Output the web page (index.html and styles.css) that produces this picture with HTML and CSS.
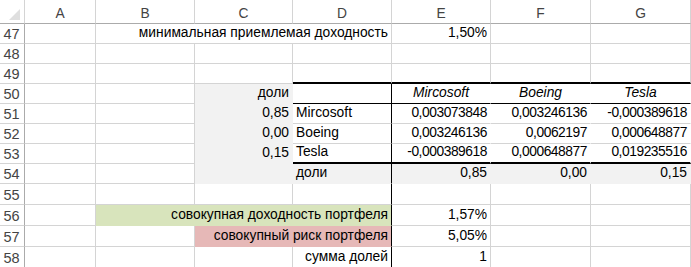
FILE: index.html
```html
<!DOCTYPE html>
<html lang="ru">
<head>
<meta charset="utf-8">
<title>Sheet</title>
<link rel="stylesheet" href="styles.css">
</head>
<body>
<div class="sheet">
  <div class="corner"><svg class="tri" width="12" height="12" viewBox="0 0 12 12"><polygon points="11,0 11,11 0,11" fill="#dfdfdf"/></svg></div>
  <div class="ch">A</div><div class="ch">B</div><div class="ch">C</div><div class="ch">D</div><div class="ch">E</div><div class="ch">F</div><div class="ch">G</div>

  <div class="rh">47</div><div class="c"></div><div class="c r span3">минимальная приемлемая доходность</div><div class="c r">1,50%</div><div class="c"></div><div class="c"></div>

  <div class="rh">48</div><div class="c"></div><div class="c"></div><div class="c"></div><div class="c"></div><div class="c"></div><div class="c"></div><div class="c"></div>

  <div class="rh">49</div><div class="c"></div><div class="c"></div><div class="c"></div><div class="c thickB"></div><div class="c thickB"></div><div class="c thickB"></div><div class="c thickB"></div>

  <div class="rh">50</div><div class="c"></div><div class="c"></div><div class="c r gray">доли</div><div class="c white bR blkB"></div><div class="c ctr it white blkB">Mircosoft</div><div class="c ctr it white blkB">Boeing</div><div class="c ctr it white blkB">Tesla</div>

  <div class="rh">51</div><div class="c"></div><div class="c"></div><div class="c r gray">0,85</div><div class="c white bR">Mircosoft</div><div class="c r num white">0,003073848</div><div class="c r num white">0,003246136</div><div class="c r num white">-0,000389618</div>

  <div class="rh">52</div><div class="c"></div><div class="c"></div><div class="c r gray">0,00</div><div class="c white bR">Boeing</div><div class="c r num white">0,003246136</div><div class="c r num white">0,0062197</div><div class="c r num white">0,000648877</div>

  <div class="rh">53</div><div class="c"></div><div class="c"></div><div class="c r gray">0,15</div><div class="c white bR thickB">Tesla</div><div class="c r num white thickB">-0,000389618</div><div class="c r num white thickB">0,000648877</div><div class="c r num white thickB">0,019235516</div>

  <div class="rh">54</div><div class="c"></div><div class="c"></div><div class="c gray"></div><div class="c gray bR">доли</div><div class="c r gray">0,85</div><div class="c r gray">0,00</div><div class="c r gray">0,15</div>

  <div class="rh">55</div><div class="c"></div><div class="c"></div><div class="c"></div><div class="c bR"></div><div class="c"></div><div class="c"></div><div class="c"></div>

  <div class="rh">56</div><div class="c"></div><div class="c r green span3 bR">совокупная доходность портфеля</div><div class="c r">1,57%</div><div class="c"></div><div class="c"></div>

  <div class="rh">57</div><div class="c"></div><div class="c"></div><div class="c r pink span2 bR">совокупный риск портфеля</div><div class="c r">5,05%</div><div class="c"></div><div class="c"></div>

  <div class="rh">58</div><div class="c"></div><div class="c"></div><div class="c"></div><div class="c r bR">сумма долей</div><div class="c r">1</div><div class="c"></div><div class="c"></div>
</div>
</body>
</html>
```

FILE: styles.css
```css
html, body {
  margin: 0;
  padding: 0;
  background: #ffffff;
}

.sheet {
  display: grid;
  grid-template-columns: 25px 71px 99px 98px 99px 99px 100px 100px;
  grid-template-rows: 24px repeat(8, 20px) repeat(4, 21px);
  width: 691px;
  overflow: hidden;
  font-family: "Liberation Sans", Arial, sans-serif;
  font-size: 13.8px;
  color: #000000;
}

.corner {
  box-sizing: border-box;
  border-right: 1px solid #d4d4d4;
  border-bottom: 1px solid #ababab;
  display: flex;
  align-items: flex-end;
  justify-content: flex-end;
  padding: 0 3px 2px 0;
}

.tri {
  display: block;
}

.ch {
  box-sizing: border-box;
  border-right: 1px solid #d4d4d4;
  border-bottom: 1px solid #ababab;
  display: flex;
  align-items: center;
  justify-content: center;
  color: #444444;
  padding-top: 3px;
}

.rh {
  box-sizing: border-box;
  border-right: 1px solid #ababab;
  border-bottom: 1px solid #d4d4d4;
  display: flex;
  align-items: flex-end;
  justify-content: center;
  color: #444444;
  padding-bottom: 1px;
  padding-right: 1px;
  font-size: 14.5px;
}

.c {
  box-sizing: border-box;
  border-right: 1px solid #d4d4d4;
  border-bottom: 1px solid #d4d4d4;
  display: flex;
  align-items: flex-end;
  padding: 0 3px 2px 3px;
  white-space: nowrap;
  line-height: 16px;
}

.r { justify-content: flex-end; }
.ctr { justify-content: center; }
.it { font-style: italic; }
.num { letter-spacing: -0.45px; }

.span3 { grid-column: span 3; }
.span2 { grid-column: span 2; }

.white {
  border-right-color: #ffffff;
}

.gray {
  background: #f2f2f2;
  border-right-color: #f2f2f2;
  border-bottom-color: #f2f2f2;
}

.green {
  background: #d8e4bc;
  border-bottom-color: #d8e4bc;
}

.pink {
  background: #e6b8b7;
  border-bottom-color: #e6b8b7;
}

.bR { border-right: 1px solid #000000; }
.blkB { border-bottom: 1px solid #000000; }
.thickB { border-bottom: 2px solid #000000; }
```
